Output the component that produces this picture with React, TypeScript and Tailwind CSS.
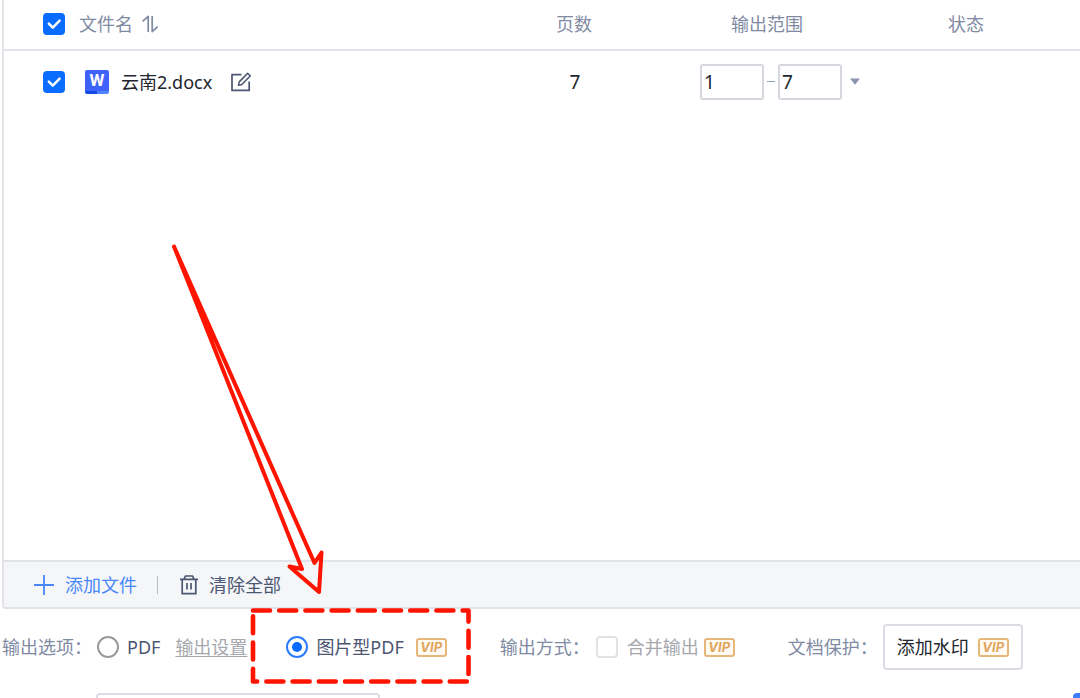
import React, { useState } from "react";

function Checkbox({ label, defaultChecked = false, disabled = false, id }: {
  label?: string;
  defaultChecked?: boolean;
  disabled?: boolean;
  id?: string;
}) {
  return (
    <span className="grid size-[22px] shrink-0 place-items-center">
      <input
        id={id}
        type="checkbox"
        aria-label={label}
        defaultChecked={defaultChecked}
        disabled={disabled}
        className="peer col-start-1 row-start-1 size-[22px] appearance-none rounded-[4px] border-2 border-[#e2e2e2] bg-white checked:border-[#0a6cff] checked:bg-[#0a6cff]"
      />
      <svg viewBox="0 0 22 22" className="pointer-events-none invisible col-start-1 row-start-1 size-[22px] peer-checked:visible" fill="none" stroke="#fff" strokeWidth="2.5" strokeLinecap="round" strokeLinejoin="round" aria-hidden="true">
        <path d="M5.8 10.7l4 4 6.8-7" />
      </svg>
    </span>
  );
}

function Vip() {
  return (
    <span className="flex h-[19px] w-[31px] shrink-0 items-center justify-center rounded-[3px] border-2 border-[#e6b67a] bg-[#fffaf2] font-['Inter',sans-serif] text-[13px] font-bold italic leading-none text-[#dfa55c]">
      VIP
    </span>
  );
}

function Radio({ id, checked, onChange }: { id: string; checked: boolean; onChange: () => void }) {
  return (
    <span className="grid size-[22px] shrink-0 place-items-center">
      <input
        id={id}
        type="radio"
        name="format"
        checked={checked}
        onChange={onChange}
        className="peer col-start-1 row-start-1 size-[22px] appearance-none rounded-full border-2 border-[#9a9a9a] bg-white checked:border-[#2a7bff]"
      />
      <span className="pointer-events-none invisible col-start-1 row-start-1 size-[10px] rounded-full bg-[#0a6cff] peer-checked:visible" />
    </span>
  );
}

function SortIcon() {
  return (
    <svg viewBox="0 0 16 18" className="h-[18px] w-4" fill="none" stroke="#7f8aa3" strokeWidth="1.7" strokeLinejoin="round" aria-hidden="true">
      <path d="M.6 6.4L6.2 1.4V17" />
      <path d="M15.6 11.6L10.2 16.6V1" />
    </svg>
  );
}

function WordIcon() {
  return (
    <span className="grid size-6 place-items-center" aria-hidden="true">
      <svg viewBox="0 0 24 24" className="col-start-1 row-start-1 size-6">
        <path d="M2 0h20a2 2 0 0 1 2 2v19H0V2a2 2 0 0 1 2-2z" fill="#3f63fa" />
        <path d="M0 21h12v3H2a2 2 0 0 1-2-2z" fill="#1449e4" />
        <path d="M12 21h12v1a2 2 0 0 1-2 2H12z" fill="#4f86ff" />
      </svg>
      <span className="col-start-1 row-start-1 pb-1 font-['Roboto',sans-serif] text-[17px] font-bold leading-4 text-white">W</span>
    </span>
  );
}

function EditIcon() {
  return (
    <svg viewBox="0 0 22 20" className="h-5 w-[22px]" fill="none" stroke="#4b5672" strokeWidth="1.7" strokeLinejoin="round" aria-hidden="true">
      <path d="M11.5 2.6H2v15.8h17.2V9.5" />
      <path d="M17.6 1.4l2.7 2.4-8.4 8.8-3.4.7.7-3.4z" strokeWidth="1.5" />
    </svg>
  );
}

function TrashIcon() {
  return (
    <svg viewBox="0 0 18 20" className="h-5 w-[18px]" fill="none" stroke="#4b5672" strokeWidth="1.7" strokeLinejoin="round" aria-hidden="true">
      <path d="M0 4.3h18M4 4.3L5.4 1h7.2L14 4.3M2.2 4.3v14.4h13.6V4.3M7 8v6.5M11 8v6.5" />
    </svg>
  );
}

function Annotation() {
  return (
    <svg width="480" height="690" className="pointer-events-none absolute left-0 top-0" fill="none" stroke="#ff1400" strokeLinecap="round" strokeLinejoin="round" aria-hidden="true">
      <path d="M174 246.5L302 569L289.5 566.5L319 592L321.5 552.5L314.5 563Z" strokeWidth="4" />
      <path d="M253 610.5H468.5V681.5H253Z" strokeWidth="4.6" strokeDasharray="17 9.2" />
    </svg>
  );
}

export default function App() {
  const [format, setFormat] = useState("image");
  const [from, setFrom] = useState("1");
  const [to, setTo] = useState("7");
  const rangeInput = "h-9 w-16 rounded-[3px] border-2 border-[#d6d6de] bg-white pl-[2px] text-[19px] text-[#22262e] outline-none";

  return (
    <main className="relative h-screen overflow-hidden bg-white font-['Noto_Sans','Noto_Sans_CJK_SC',sans-serif] text-[18px] leading-6 text-[#7f8aa3]">
      <section className="ml-[2px] rounded-bl-[4px] border-b-2 border-l-2 border-[#e1e3e8]">
        <div className="min-h-[560px]">
          <table className="w-full table-fixed border-collapse">
            <thead>
              <tr className="h-[50px] border-b-2 border-[#e4e5ec]">
                <th className="pb-[2px] pl-[39px] text-left font-normal">
                  <div className="flex items-center">
                    <Checkbox label="全选" defaultChecked />
                    <span className="ml-[14px]">文件名</span>
                    <button type="button" aria-label="排序" className="ml-[9px]"><SortIcon /></button>
                  </div>
                </th>
                <th className="w-[192px] pb-[2px] font-normal">页数</th>
                <th className="w-[194px] pb-[2px] font-normal">输出范围</th>
                <th className="w-[216px] pb-[2px] pr-3 font-normal">状态</th>
              </tr>
            </thead>
            <tbody className="text-[#22262e]">
              <tr className="h-[62px]">
                <td className="pl-[39px]">
                  <div className="flex items-center">
                    <Checkbox label="选择 云南2.docx" defaultChecked />
                    <span className="ml-5"><WordIcon /></span>
                    <span className="ml-3">云南2.docx</span>
                    <button type="button" aria-label="编辑" className="ml-[18px]"><EditIcon /></button>
                  </div>
                </td>
                <td className="pl-[2px] text-center text-[19px]">7</td>
                <td className="pl-[30px]">
                  <div className="flex items-center">
                    <input aria-label="起始页" value={from} onChange={(e) => setFrom(e.target.value)} className={rangeInput} />
                    <span className="mx-[3px] h-px w-2 shrink-0 bg-[#8fa0b8]" />
                    <input aria-label="结束页" value={to} onChange={(e) => setTo(e.target.value)} className={rangeInput} />
                    <button type="button" aria-label="选择范围" className="ml-2 shrink-0">
                      <svg viewBox="0 0 10 7" className="h-[7px] w-[10px]" aria-hidden="true"><path d="M0 .5h10L5 6.8z" fill="#8c95b0" /></svg>
                    </button>
                  </div>
                </td>
                <td />
              </tr>
            </tbody>
          </table>
        </div>
        <div className="flex h-[47px] items-center border-t-2 border-[#e1e3e8] bg-[#f5f6f8] pl-[30px]">
          <button type="button" className="flex items-center gap-[11px] text-[#4787fa]">
            <svg viewBox="0 0 20 20" className="size-5" stroke="#4787fa" strokeWidth="1.8" aria-hidden="true"><path d="M0 10h20M10 0v20" /></svg>
            添加文件
          </button>
          <span className="ml-5 h-[18px] w-px bg-[#b9bdc7]" />
          <button type="button" className="ml-[22px] flex items-center gap-[11px] text-[#4b5672]">
            <TrashIcon />
            清除全部
          </button>
        </div>
      </section>

      <form className="whitespace-nowrap">
        <div className="flex h-[76px] items-center pl-[2px]">
          <span className="w-[95px] shrink-0">输出选项：</span>
          <Radio id="pdf" checked={format === "pdf"} onChange={() => setFormat("pdf")} />
          <label htmlFor="pdf" className="ml-2 text-[#4b5672]">PDF</label>
          <a href="#settings" className="ml-[15px] w-[73px] shrink-0 text-[#a5a7ad] underline decoration-1 underline-offset-2">输出设置</a>
          <span className="ml-[38px] flex items-center">
            <Radio id="image-pdf" checked={format === "image"} onChange={() => setFormat("image")} />
            <label htmlFor="image-pdf" className="ml-2 flex items-center gap-3 text-[#4b5672]">图片型PDF<Vip /></label>
          </span>
          <span className="ml-[53px] w-24 shrink-0">输出方式：</span>
          <Checkbox id="merge" disabled />
          <label htmlFor="merge" className="ml-[9px] flex items-center gap-[5px] text-[#a5a7ad]">合并输出<Vip /></label>
          <span className="ml-[53px] w-[95px] shrink-0">文档保护：</span>
          <button type="button" className="flex h-[46px] w-[140px] shrink-0 items-center justify-center gap-[9px] rounded-[4px] border-2 border-[#dcdde4] bg-white text-[#22262e]">
            添加水印<Vip />
          </button>
        </div>
        <div className="mt-2 flex items-start justify-between pl-24">
          <select aria-label="输出目录" className="h-10 w-[284px] appearance-none rounded-[4px] border-2 border-[#dcdde4] bg-white" />
          <button type="button" aria-label="开始转换" className="-mr-[113px] h-10 w-[120px] rounded-[4px] bg-[#3f7dfb]" />
        </div>
      </form>
      <Annotation />
    </main>
  );
}
